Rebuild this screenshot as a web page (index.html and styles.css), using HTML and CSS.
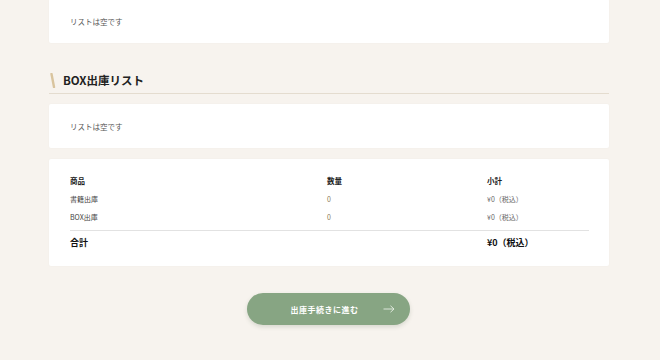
FILE: index.html
```html
<!DOCTYPE html>
<html lang="ja">
<head>
  <meta charset="utf-8" />
  <title>出庫リスト</title>
  <link rel="stylesheet" href="styles.css">
</head>
<body>
  <main class="page">
    <section class="card card-empty">
      <p class="empty">リストは空です</p>
    </section>

    <h2 class="section-title">
      <svg class="accent" width="6" height="15" viewBox="0 0 6 15"><path d="M1.5 1 L4 14" stroke="#d9c49e" stroke-width="2.4" stroke-linecap="round"/></svg>
      BOX出庫リスト
    </h2>

    <section class="card card-empty">
      <p class="empty">リストは空です</p>
    </section>

    <section class="card card-summary">
      <div class="summary">
        <div class="row head">
          <span>商品</span><span>数量</span><span>小計</span>
        </div>
        <div class="row">
          <span>書籍出庫</span><span class="qty">0</span><span class="price">¥0（税込）</span>
        </div>
        <div class="row">
          <span>BOX出庫</span><span class="qty">0</span><span class="price">¥0（税込）</span>
        </div>
        <div class="row total">
          <span>合計</span><span></span><span>¥0（税込）</span>
        </div>
      </div>
    </section>

    <div class="actions">
      <button class="proceed" type="button">
        <span>出庫手続きに進む</span>
        <svg class="arrow" width="12" height="8" viewBox="0 0 12 8"><path d="M0.5 4 H11 M7.5 0.8 L11 4 L7.5 7.2" fill="none" stroke="#e6eee4" stroke-width="0.9"/></svg>
      </button>
    </div>
  </main>
</body>
</html>
```

FILE: styles.css
```css
body {
  margin: 0;
  background: #f7f3ee;
  font-family: "Noto Sans CJK JP", "Noto Sans", sans-serif;
  color: #333;
  height: 360px;
  overflow: hidden;
}
.page {
  width: 560px;
  margin: -1px auto 0 49px;
}
.card {
  background: #fff;
  border-radius: 2px;
  box-shadow: 0 0 2px rgba(120, 100, 70, 0.05);
}
.card-empty {
  height: 44px;
  display: flex;
  align-items: center;
  padding: 0 21px;
  box-sizing: border-box;
}
.empty {
  margin: 0;
  font-size: 7.5px;
  color: #555;
}
.section-title {
  display: flex;
  align-items: center;
  gap: 7px;
  margin: 28px 0 10px;
  padding: 0 0 4px 1px;
  height: 18px;
  font-size: 11.5px;
  font-weight: 700;
  color: #222;
  border-bottom: 1px solid #e4dccf;
}
.card-summary {
  margin-top: 11px;
  padding: 12px 20px 13px 21px;
}
.row {
  display: grid;
  grid-template-columns: 257px 160px 1fr;
  align-items: center;
  height: 18px;
  font-size: 7px;
  color: #444;
}
.row.head {
  height: 19px;
  font-size: 7.5px;
  font-weight: 700;
  color: #222;
}
.qty {
  color: #8a7a55;
}
.price {
  color: #666;
}
.row.total {
  margin-top: 4px;
  border-top: 1px solid #e2e2e2;
  height: 22px;
  font-size: 9px;
  font-weight: 700;
  color: #111;
}
.actions {
  display: flex;
  justify-content: center;
  margin-top: 27px;
  padding-right: 1px;
}
.proceed {
  position: relative;
  width: 163px;
  height: 32px;
  border: none;
  border-radius: 16px;
  background: #87a583;
  color: #fff;
  font-family: inherit;
  font-size: 8px;
  font-weight: 700;
  letter-spacing: 0.5px;
  padding-right: 14px;
  box-shadow: 0 2px 4px rgba(80, 100, 70, 0.18);
  cursor: pointer;
}
.arrow {
  position: absolute;
  right: 15px;
  top: 12px;
}
```
